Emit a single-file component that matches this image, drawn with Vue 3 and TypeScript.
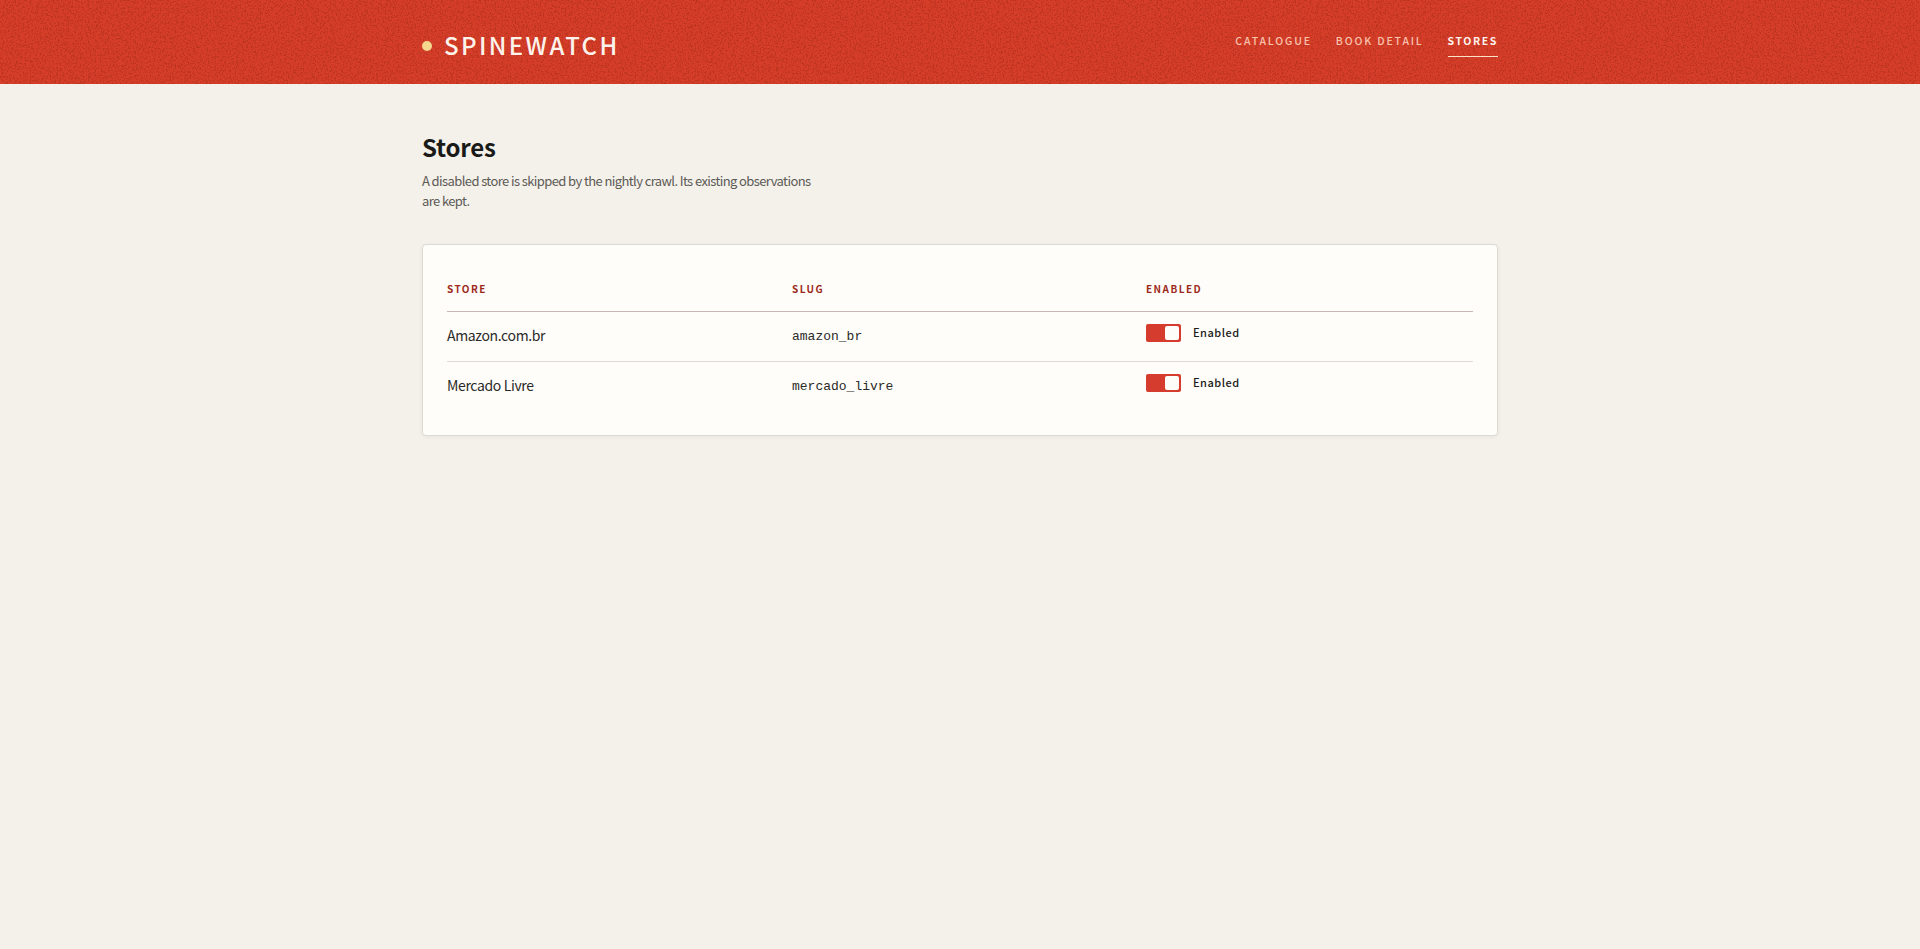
<template>
  <div class="page">
    <header class="masthead">
      <svg class="grain" aria-hidden="true">
        <filter id="grain-filter" color-interpolation-filters="sRGB" x="0" y="0" width="100%" height="100%">
          <feTurbulence type="fractalNoise" baseFrequency="0.6" numOctaves="3" seed="4" />
          <feColorMatrix values="0 0 0 0 0.5  0 0 0 0 0.12  0 0 0 0 0.05  6 0 0 0 -2.9" />
        </filter>
        <rect width="100%" height="100%" filter="url(#grain-filter)" />
      </svg>
      <div class="masthead-inner">
        <div class="brand">
          <span class="brand-dot"></span>
          <span class="brand-name">SPINEWATCH</span>
        </div>
        <nav class="nav">
          <a
            v-for="link in links"
            :key="link.label"
            class="nav-link"
            :class="{ active: link.active }"
            href="#"
          >{{ link.label }}</a>
        </nav>
      </div>
    </header>

    <main class="content">
      <h1 class="title">Stores</h1>
      <p class="lede">A disabled store is skipped by the nightly crawl. Its existing observations are kept.</p>

      <section class="card">
        <table class="table">
          <colgroup>
            <col class="col-store" />
            <col class="col-slug" />
            <col />
          </colgroup>
          <thead>
            <tr>
              <th>STORE</th>
              <th>SLUG</th>
              <th>ENABLED</th>
            </tr>
          </thead>
          <tbody>
            <tr v-for="store in stores" :key="store.slug">
              <td class="store-name">{{ store.name }}</td>
              <td class="store-slug">{{ store.slug }}</td>
              <td>
                <label class="toggle">
                  <span class="switch" :class="{ on: store.enabled }" @click="store.enabled = !store.enabled">
                    <span class="thumb"></span>
                  </span>
                  <span class="toggle-label">{{ store.enabled ? 'Enabled' : 'Disabled' }}</span>
                </label>
              </td>
            </tr>
          </tbody>
        </table>
      </section>
    </main>
  </div>
</template>

<script setup lang="ts">
import { reactive } from 'vue'

interface Store {
  name: string
  slug: string
  enabled: boolean
}

const links = [
  { label: 'CATALOGUE', active: false },
  { label: 'BOOK DETAIL', active: false },
  { label: 'STORES', active: true },
]

const stores = reactive<Store[]>([
  { name: 'Amazon.com.br', slug: 'amazon_br', enabled: true },
  { name: 'Mercado Livre', slug: 'mercado_livre', enabled: true },
])
</script>

<style>
html,
body {
  margin: 0;
  background: #f4f1eb;
}
</style>

<style scoped>
.page {
  min-height: 949px;
  background: #f4f1eb;
  color: #1a1a18;
  font-family: "Noto Sans CJK JP", "Noto Sans", sans-serif;
}

.masthead {
  position: relative;
  height: 84px;
  background: #d63e29;
  overflow: hidden;
}

.grain {
  position: absolute;
  inset: 0;
  width: 100%;
  height: 100%;
  opacity: 0.28;
}

.masthead-inner {
  position: relative;
  width: 1076px;
  height: 100%;
  margin: 0 auto;
  display: flex;
  align-items: center;
  justify-content: space-between;
}

.brand {
  display: flex;
  align-items: center;
  gap: 12px;
  margin-top: 7px;
}

.brand-dot {
  width: 10px;
  height: 10px;
  border-radius: 50%;
  background: #f5d78e;
}

.brand-name {
  margin-top: -2px;
  color: #fdf3ec;
  font-size: 24px;
  font-weight: 500;
  letter-spacing: 2.4px;
  line-height: 1;
}

.nav {
  display: flex;
  gap: 24px;
}

.nav-link {
  color: #f9c3ae;
  font-size: 10.5px;
  font-weight: 500;
  letter-spacing: 1.85px;
  line-height: 16px;
  padding: 5px 0 7px;
  border-bottom: 1px solid transparent;
  text-decoration: none;
}

.nav-link.active {
  color: #fdf3ec;
  font-weight: 700;
  letter-spacing: 1.6px;
  border-bottom-color: #fbe3c8;
}

.content {
  width: 1076px;
  margin: 0 auto;
  padding-top: 46px;
}

.title {
  margin: 0;
  font-size: 24px;
  font-weight: 700;
  letter-spacing: -0.2px;
  line-height: 34px;
  color: #1a1a18;
}

.lede {
  width: 400px;
  margin: 7px 0 0;
  font-size: 13px;
  letter-spacing: -0.6px;
  line-height: 20px;
  color: #5c5a55;
}

.card {
  margin-top: 33px;
  padding: 24px 24px 23px;
  background: #fffdf9;
  border: 1px solid #dedad3;
  border-radius: 4px;
  box-shadow: 0 1px 4px rgba(0, 0, 0, 0.06);
}

.table {
  width: 100%;
  border-collapse: collapse;
  table-layout: fixed;
}

.col-store {
  width: 345px;
}

.col-slug {
  width: 354px;
}

th {
  height: 38px;
  padding: 0 0 4px;
  border-bottom: 1px solid #c9b5b1;
  text-align: left;
  color: #9c2a1c;
  font-size: 10px;
  font-weight: 700;
  letter-spacing: 1.45px;
}

td {
  box-sizing: border-box;
  height: 50px;
  padding: 0;
  vertical-align: middle;
}

tbody tr + tr td {
  border-top: 1px solid #e0dcd5;
}

.store-name {
  font-size: 14px;
  letter-spacing: -0.36px;
  color: #2a2a28;
  padding-bottom: 3px;
}

.store-slug {
  font-family: "Liberation Mono", monospace;
  font-size: 13px;
  color: #2a2a28;
}

.toggle {
  display: flex;
  align-items: center;
  gap: 12px;
  margin-top: -7px;
}

.switch {
  box-sizing: border-box;
  display: flex;
  justify-content: flex-end;
  width: 35px;
  height: 18px;
  padding: 2px;
  background: #d63c2e;
  border-radius: 2px;
}

.switch:not(.on) {
  justify-content: flex-start;
  background: #c8c4bc;
}

.thumb {
  width: 14px;
  height: 14px;
  background: #fffdf9;
  border-radius: 2px;
}

.toggle-label {
  margin-top: -2px;
  font-size: 11px;
  font-weight: 500;
  letter-spacing: 0.5px;
  color: #1a1a18;
}
</style>
